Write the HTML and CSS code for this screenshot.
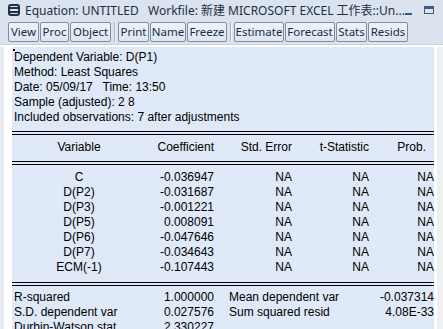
FILE: index.html
```html
<!DOCTYPE html>
<html>
<head>
<meta charset="utf-8">
<link rel="stylesheet" href="styles.css">
</head>
<body>
<div class="window">
  <div class="titlebar">
    <span class="app-icon"><span></span><span></span></span>
    <span class="title">Equation: UNTITLED   Workfile: 新建 MICROSOFT EXCEL 工作表::Un...</span>
    <span class="win-btns">
      <span class="min"></span>
      <span class="max"></span>
    </span>
  </div>
  <div class="toolbar">
    <div class="group">
      <span class="btn w31">View</span><span class="btn w29">Proc</span><span class="btn w41">Object</span>
    </div>
    <span class="sep"></span>
    <div class="group">
      <span class="btn w31">Print</span><span class="btn w36">Name</span><span class="btn w40">Freeze</span>
    </div>
    <span class="sep"></span>
    <div class="group">
      <span class="btn w50">Estimate</span><span class="btn w50">Forecast</span><span class="btn w31">Stats</span><span class="btn w40">Resids</span>
    </div>
  </div>
  <div class="body">
    <div class="frame-left"></div>
    <div class="panel">
      <div class="info">
        <div>Dependent Variable: D(P1)</div>
        <div>Method: Least Squares</div>
        <div>Date: 05/09/17&nbsp;&nbsp; Time: 13:50</div>
        <div>Sample (adjusted): 2 8</div>
        <div>Included observations: 7 after adjustments</div>
      </div>
      <div class="dbl"></div>
      <div class="grid head">
        <span class="c">Variable</span><span class="r">Coefficient</span><span class="r">Std. Error</span><span class="r">t-Statistic</span><span class="r prob">Prob.</span>
      </div>
      <div class="dbl"></div>
      <div class="grid rows">
        <span class="c">C</span><span class="r">-0.036947</span><span class="r">NA</span><span class="r">NA</span><span class="r">NA</span>
        <span class="c">D(P2)</span><span class="r">-0.031687</span><span class="r">NA</span><span class="r">NA</span><span class="r">NA</span>
        <span class="c">D(P3)</span><span class="r">-0.001221</span><span class="r">NA</span><span class="r">NA</span><span class="r">NA</span>
        <span class="c">D(P5)</span><span class="r">0.008091</span><span class="r">NA</span><span class="r">NA</span><span class="r">NA</span>
        <span class="c">D(P6)</span><span class="r">-0.047646</span><span class="r">NA</span><span class="r">NA</span><span class="r">NA</span>
        <span class="c">D(P7)</span><span class="r">-0.034643</span><span class="r">NA</span><span class="r">NA</span><span class="r">NA</span>
        <span class="c">ECM(-1)</span><span class="r">-0.107443</span><span class="r">NA</span><span class="r">NA</span><span class="r">NA</span>
      </div>
      <div class="dbl dbl-b"></div>
      <div class="stats">
        <span class="l">R-squared</span><span class="r">1.000000</span><span class="l2">Mean dependent var</span><span class="r">-0.037314</span>
        <span class="l">S.D. dependent var</span><span class="r">0.027576</span><span class="l2">Sum squared resid</span><span class="r">4.08E-33</span>
        <span class="l">Durbin-Watson stat</span><span class="r">2.330227</span><span class="l2"></span><span class="r"></span>
      </div>
    </div>
    <div class="frame-right"></div>
  </div>
</div>
</body>
</html>
```

FILE: styles.css
```css
* { box-sizing: border-box; }
html, body { margin: 0; padding: 0; }
body {
  width: 443px;
  height: 329px;
  overflow: hidden;
  background: #ffffff;
}
.window {
  display: flex;
  flex-direction: column;
  height: 329px;
  overflow: hidden;
  background: #dae3ee;
}
.titlebar {
  flex-shrink: 0;
  display: flex;
  align-items: center;
  height: 20px;
  padding-left: 8px;
  font-family: "Noto Sans", "Noto Sans CJK SC", sans-serif;
  font-size: 12px;
  color: #1e2f45;
}
.app-icon {
  width: 18px;
  height: 12px;
  border: 2px solid #1f2f45;
  border-radius: 3px;
  display: flex;
  flex-direction: column;
  justify-content: center;
  align-items: center;
  gap: 2px;
  margin-right: 5px;
}
.app-icon span {
  width: 8px;
  height: 2px;
  background: #1f2f45;
}
.title {
  white-space: pre;
  flex: 1;
}
.win-btns {
  display: flex;
  align-items: center;
  gap: 12px;
  padding-right: 11px;
}
.min {
  width: 7px;
  height: 2px;
  background: #3e5a7e;
  margin-top: 8px;
}
.max {
  width: 10px;
  height: 8px;
  border: 1px solid #3e5a7e;
  border-top-width: 3px;
}
.toolbar {
  flex-shrink: 0;
  display: flex;
  height: 24px;
  padding: 2px 0 2px 8px;
  font-family: "Noto Sans", sans-serif;
  font-size: 11.5px;
  color: #1b2c42;
}
.group {
  display: flex;
  gap: 1px;
}
.sep {
  width: 2px;
  height: 20px;
  margin: 0 2px 0 3px;
  border-left: 1px solid #a7b4c6;
  border-right: 1px solid #f3f6fa;
}
.btn {
  display: flex;
  align-items: center;
  justify-content: center;
  height: 20px;
  border: 1px solid #7d8ea5;
  border-radius: 2px;
  background: linear-gradient(#eef3f9, #dde6f1);
  line-height: 1;
  white-space: nowrap;
}
.w29 { width: 29px; }
.w31 { width: 31px; }
.w36 { width: 36px; }
.w40 { width: 40px; }
.w41 { width: 41px; }
.w50 { width: 50px; }
.body {
  flex: 1;
  display: flex;
  background: #ffffff;
  padding-top: 2px;
  border-top: 1px solid #c8d3e0;
}
.frame-left {
  width: 12px;
  flex-shrink: 0;
  border-left: 4px solid #e6eaf3;
  background: #ffffff;
}
.frame-right {
  width: 9px;
  flex-shrink: 0;
  border-left: 3px solid #ffffff;
  background: #eef0f4;
}
.panel {
  position: relative;
  flex-shrink: 0;
  width: 422px;
  align-self: flex-start;
  background: #dfe9f8;
  font-family: "Liberation Sans", Arial, sans-serif;
  font-size: 12px;
  line-height: 15px;
  color: #000;
  padding-top: 3px;
}
.panel::before {
  content: "";
  position: absolute;
  left: 1px;
  top: 2px;
  width: 2px;
  height: 2px;
  background: #000;
}
.info {
  padding-left: 2px;
}
.dbl {
  height: 4px;
  border-top: 1px solid #000;
  border-bottom: 1px solid #000;
  margin-top: 6px;
}
.grid {
  display: grid;
  grid-template-columns: 134px 68px 78px 77px 65px;
}
.head {
  margin-top: 5px;
  margin-bottom: 6px;
}
.rows {
  margin-top: 5px;
}
.dbl-b {
  margin-top: 7px;
}
.c { text-align: center; }
.r { text-align: right; }
.prob { padding-right: 8px; }
.stats {
  display: grid;
  grid-template-columns: 134px 68px 1fr auto;
  margin-top: 4px;
}
.stats .l { padding-left: 2px; }
.stats .l2 { padding-left: 15px; }
```
